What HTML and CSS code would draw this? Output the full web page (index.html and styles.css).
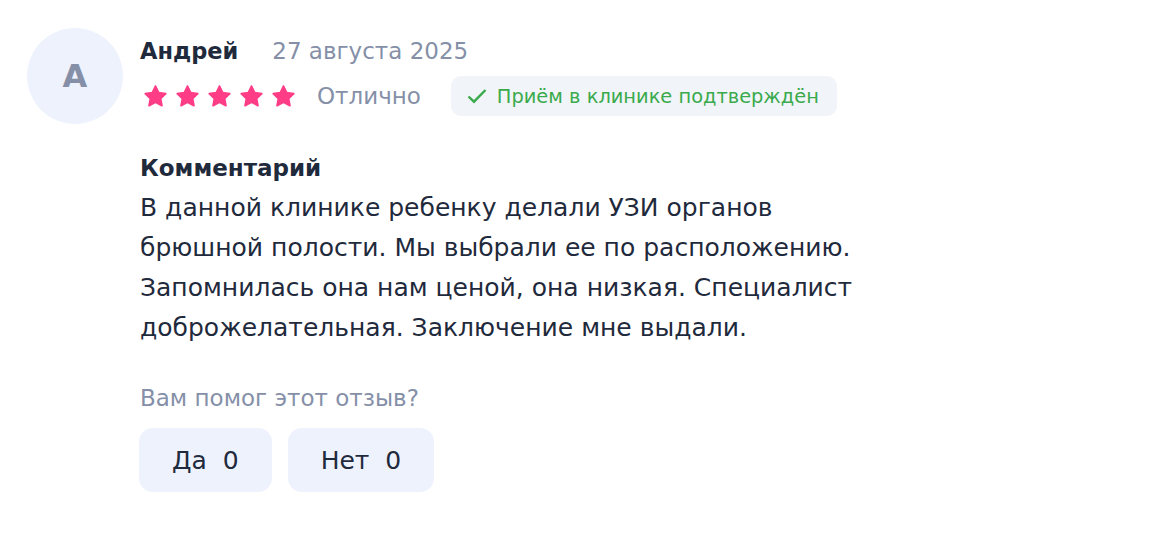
FILE: index.html
```html
<!DOCTYPE html>
<html lang="ru">
<head>
<meta charset="utf-8">
<link rel="stylesheet" href="styles.css">
</head>
<body>
<div class="review">
  <div class="avatar">А</div>
  <div class="main">
    <div class="head">
      <span class="name">Андрей</span>
      <span class="date">27 августа 2025</span>
    </div>
    <div class="rating">
      <div class="stars">
        <svg viewBox="0 0 24 24"><path d="M12 2.8l2.8 5.8 6.3.8-4.6 4.4 1.2 6.3L12 17l-5.7 3.1 1.2-6.3-4.6-4.4 6.3-.8z"/></svg>
        <svg viewBox="0 0 24 24"><path d="M12 2.8l2.8 5.8 6.3.8-4.6 4.4 1.2 6.3L12 17l-5.7 3.1 1.2-6.3-4.6-4.4 6.3-.8z"/></svg>
        <svg viewBox="0 0 24 24"><path d="M12 2.8l2.8 5.8 6.3.8-4.6 4.4 1.2 6.3L12 17l-5.7 3.1 1.2-6.3-4.6-4.4 6.3-.8z"/></svg>
        <svg viewBox="0 0 24 24"><path d="M12 2.8l2.8 5.8 6.3.8-4.6 4.4 1.2 6.3L12 17l-5.7 3.1 1.2-6.3-4.6-4.4 6.3-.8z"/></svg>
        <svg viewBox="0 0 24 24"><path d="M12 2.8l2.8 5.8 6.3.8-4.6 4.4 1.2 6.3L12 17l-5.7 3.1 1.2-6.3-4.6-4.4 6.3-.8z"/></svg>
      </div>
      <span class="grade">Отлично</span>
      <span class="badge">
        <svg viewBox="0 0 20 20"><path d="M1.5 10.5l5.5 5.2L18.5 4" fill="none" stroke="currentColor" stroke-width="2.4"/></svg>
        Приём в клинике подтверждён
      </span>
    </div>
    <div class="comment">
      <div class="title">Комментарий</div>
      <p class="text">В данной клинике ребенку делали УЗИ органов<br>брюшной полости. Мы выбрали ее по расположению.<br>Запомнилась она нам ценой, она низкая. Специалист<br>доброжелательная. Заключение мне выдали.</p>
    </div>
    <div class="helpful">Вам помог этот отзыв?</div>
    <div class="votes">
      <button class="vote">Да&nbsp;&nbsp;0</button>
      <button class="vote">Нет&nbsp;&nbsp;0</button>
    </div>
  </div>
</div>
</body>
</html>
```
FILE: styles.css
```css
* { box-sizing: border-box; }
body {
  margin: 0;
  background: #fff;
  font-family: "DejaVu Sans", sans-serif;
  color: #1f2a3c;
}
.review {
  display: flex;
  gap: 17px;
  padding: 28px 0 0 27px;
}
.avatar {
  width: 96px;
  height: 96px;
  border-radius: 50%;
  background: #eef2fd;
  color: #8590a8;
  font-size: 32px;
  font-weight: 600;
  display: flex;
  align-items: center;
  justify-content: center;
  flex-shrink: 0;
}
.main { display: flex; flex-direction: column; }
.head {
  display: flex;
  gap: 34px;
  align-items: baseline;
  height: 48px;
  padding-top: 10px;
}
.name { font-size: 22.5px; font-weight: 600; color: #1f2a3c; }
.date { font-size: 23px; color: #8590a8; }
.rating {
  display: flex;
  align-items: center;
  height: 40px;
}
.stars { display: flex; gap: 5px; margin-left: 2px; }
.stars svg {
  width: 27px;
  height: 27px;
  fill: #ff3d86;
  stroke: #ff3d86;
  stroke-width: 1.6;
  stroke-linejoin: round;
}
.grade { font-size: 23px; color: #8590a8; margin-left: 20px; }
.badge {
  margin-left: 30px;
  background: #f1f4f9;
  border-radius: 10px;
  height: 40px;
  padding: 0 18px 0 16px;
  display: flex;
  align-items: center;
  gap: 10px;
  color: #3aaa4c;
  font-size: 19.4px;
}
.badge svg { width: 20px; height: 20px; }
.comment { margin-top: 32px; }
.title { font-size: 23px; font-weight: 600; line-height: 40px; }
.text { margin: 0; font-size: 25px; line-height: 40px; }
.helpful { margin-top: 36px; font-size: 23px; color: #8590a8; line-height: 28px; }
.votes { display: flex; gap: 16px; margin-top: 16px; margin-left: -1px; }
.vote {
  border: none;
  background: #eef2fd;
  border-radius: 14px;
  height: 64px;
  padding: 0 33px;
  font-family: inherit;
  font-size: 25px;
  color: #1f2a3c;
}
```
